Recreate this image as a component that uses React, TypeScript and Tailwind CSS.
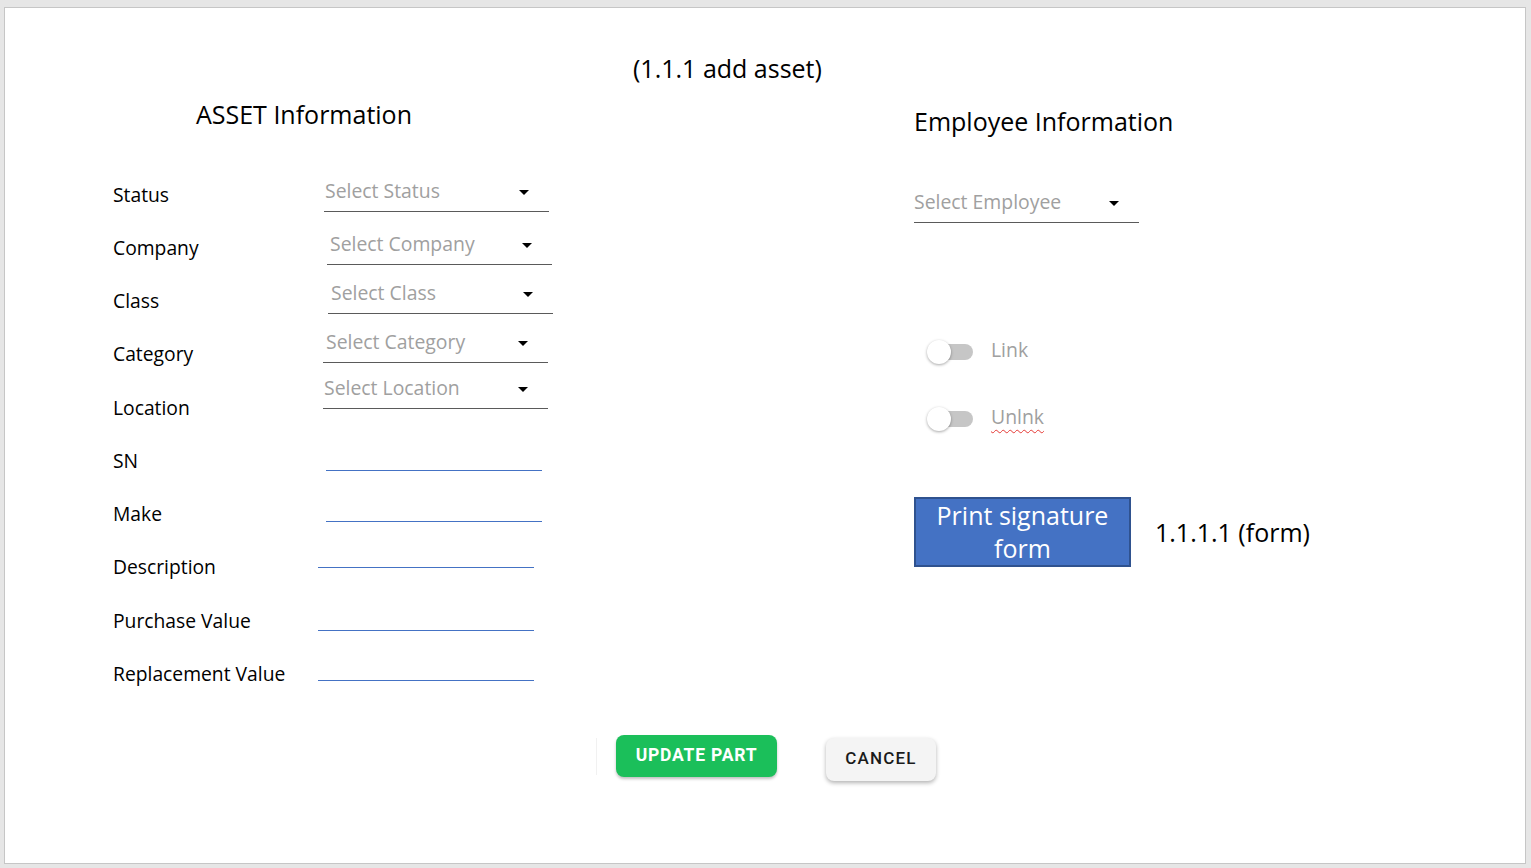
import React from "react";

function Arrow() {
  return (
    <span className="block w-0 h-0 border-l-[5px] border-r-[5px] border-t-[5px] border-l-transparent border-r-transparent border-t-black" />
  );
}

function SelectBox({ text, cls, pl }: { text: string; cls: string; pl: string }) {
  return (
    <div className={`w-[225px] h-[37px] border-b border-[#5a5a5a] flex items-start justify-between pr-[20px] pt-[3px] ${cls}`}>
      <span className={`leading-[26px] text-[19.4px] text-[#a0a0a0] ${pl}`}>{text}</span>
      <span className="mt-[12px]">
        <Arrow />
      </span>
    </div>
  );
}

function BlueLine({ cls }: { cls: string }) {
  return <div className={`w-[216px] h-px bg-[#4472c4] ${cls}`} />;
}

function Toggle({ label, wavy }: { label: string; wavy?: boolean }) {
  return (
    <div className="flex items-center h-[32px] ml-[13px]">
      <div className="relative w-[46px] h-[24px] flex items-center">
        <div className="ml-[3px] w-[43px] h-[16px] rounded-full bg-[#c6c6c6]" />
        <div className="absolute left-0 top-0 w-[24px] h-[24px] rounded-full bg-white shadow-[0_1px_3px_rgba(0,0,0,0.35)]" />
      </div>
      <span
        className={`ml-[18px] -mt-[4px] text-[19.4px] leading-[26px] text-[#a0a0a0] ${
          wavy ? "underline decoration-wavy decoration-[#e53935] decoration-1 underline-offset-[5px]" : ""
        }`}
      >
        {label}
      </span>
    </div>
  );
}

export default function App() {
  const rows: { label: string; field: React.ReactNode }[] = [
    { label: "Status", field: <SelectBox text="Select Status" cls="mt-[7px] ml-[6px]" pl="pl-[1px]" /> },
    { label: "Company", field: <SelectBox text="Select Company" cls="mt-[7px] ml-[9px]" pl="pl-[3px]" /> },
    { label: "Class", field: <SelectBox text="Select Class" cls="mt-[2px] ml-[10px]" pl="pl-[3px]" /> },
    { label: "Category", field: <SelectBox text="Select Category" cls="-mt-[2px] ml-[5px]" pl="pl-[3px]" /> },
    { label: "Location", field: <SelectBox text="Select Location" cls="-mt-[9px] ml-[5px]" pl="pl-[1px]" /> },
    { label: "SN", field: <BlueLine cls="mt-[36px] ml-[8px]" /> },
    { label: "Make", field: <BlueLine cls="mt-[33px] ml-[8px]" /> },
    { label: "Description", field: <BlueLine cls="mt-[26px]" /> },
    { label: "Purchase Value", field: <BlueLine cls="mt-[36px]" /> },
    { label: "Replacement Value", field: <BlueLine cls="mt-[33px]" /> },
  ];

  return (
    <div className="min-h-[868px] bg-[#e6e6e6] pt-[7px] pl-[4px]" style={{ fontFamily: "'Open Sans', 'Noto Sans', sans-serif" }}>
      <div className="w-[1522px] h-[857px] bg-white border border-[#c6c6c6] flex flex-col text-black">
        {/* title */}
        <div className="pt-[44px] pl-[628px] text-[25px] leading-[32px]">(1.1.1 add asset)</div>

        <div className="flex">
          {/* left column */}
          <div className="ml-[108px] w-[450px] flex flex-col">
            <div className="mt-[14px] ml-[83px] text-[25px] leading-[32px]">ASSET Information</div>
            <div className="mt-[38px] flex flex-col">
              {rows.map((r) => (
                <div key={r.label} className="h-[53.25px] flex items-start">
                  <div className="w-[205px] shrink-0 h-[53.25px] flex items-center text-[19.3px] leading-[26px]">{r.label}</div>
                  {r.field}
                </div>
              ))}
            </div>
          </div>

          {/* right column */}
          <div className="ml-[351px] flex flex-col">
            <div className="mt-[21px] text-[25px] leading-[32px]">Employee Information</div>
            <div className="mt-[49px] w-[225px] h-[37px] border-b border-[#5a5a5a] flex items-start justify-between pr-[20px] pt-[3px]">
              <span className="leading-[26px] text-[19.4px] text-[#a0a0a0]">Select Employee</span>
              <span className="mt-[12px]">
                <Arrow />
              </span>
            </div>
            <div className="mt-[113px]">
              <Toggle label="Link" />
            </div>
            <div className="mt-[35px]">
              <Toggle label="Unlnk" wavy />
            </div>
            <div className="mt-[62px] flex items-center">
              <div className="w-[217px] h-[70px] bg-[#4472c4] border-2 border-[#2f528f] flex items-center justify-center text-center text-white text-[25px] leading-[33px]">
                Print signature
                <br />
                form
              </div>
              <div className="ml-[24px] text-[25px] leading-[32px]">1.1.1.1 (form)</div>
            </div>
          </div>
        </div>

        {/* buttons */}
        <div className="mt-[34px] flex items-start" style={{ fontFamily: "Roboto, 'Liberation Sans', sans-serif" }}>
          <div className="ml-[591px] mt-[3px] w-px h-[37px] bg-[#f1f1f1]" />
          <button className="ml-[19px] w-[161px] h-[42px] rounded-[8px] bg-[#1bbf5a] text-white font-bold text-[17.5px] tracking-[0.8px] shadow-[0_2px_3px_rgba(0,0,0,0.25)]">
            UPDATE PART
          </button>
          <button className="ml-[49px] mt-[3px] w-[110px] h-[43px] rounded-[8px] bg-[#f4f4f4] text-[#1b1b1b] font-medium text-[17px] tracking-[1.2px] shadow-[0_2px_4px_rgba(0,0,0,0.3)]">
            CANCEL
          </button>
        </div>
      </div>
    </div>
  );
}
